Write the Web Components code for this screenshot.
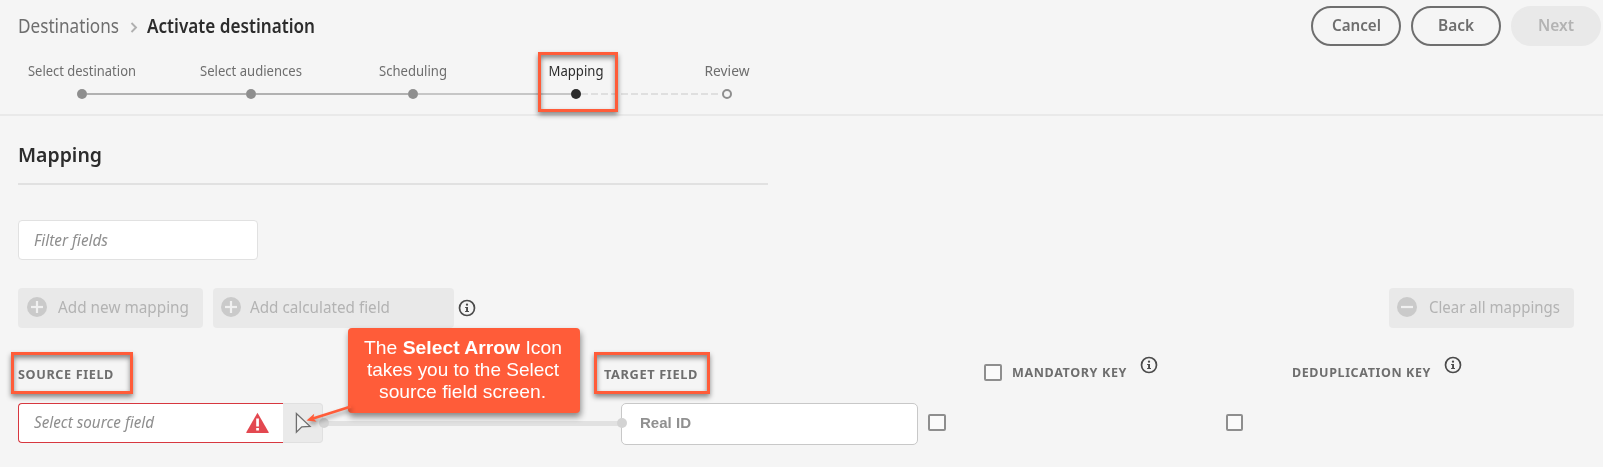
<!DOCTYPE html>
<html lang="en">
<head>
<meta charset="utf-8">
<title>Activate destination</title>
<style>
html,body{margin:0;padding:0;background:#f5f5f5;overflow:hidden}
body{width:1603px;height:467px;font-family:"Noto Sans","Open Sans",sans-serif;color:#6e6e6e}
</style>
</head>
<body>
<activate-page></activate-page>
<script>
const define = (name, html, init) => customElements.define(name, class extends HTMLElement {
  constructor() {
    super();
    const t = document.createElement('template');
    t.innerHTML = html;
    this.attachShadow({mode: 'open'}).append(t.content.cloneNode(true));
  }
  connectedCallback() { if (init) init.call(this, this.shadowRoot); }
});

/* Label set to a fixed width: w = width, s = font size */
define('fit-text', `<style>
:host{display:block;flex:none;height:20px;line-height:20px;white-space:nowrap}
span{display:inline-block;transform-origin:0 50%;vertical-align:top}
</style><span><slot></slot></span>`, function (r) {
  const w = +this.getAttribute('w'), span = r.querySelector('span');
  this.style.fontSize = this.getAttribute('s') + 'px';
  this.style.width = w + 'px';
  span.style.transform = 'scaleX(' + w / span.getBoundingClientRect().width + ')';
});

define('info-icon', `<style>:host{display:block;flex:none;width:18px;height:18px}svg{display:block}</style>
<svg width="18" height="18" viewBox="0 0 18 18"><circle cx="9" cy="9" r="7.5" fill="none" stroke="#4b4b4b" stroke-width="1.7"/>
<circle cx="9" cy="5.7" r="1.15" fill="#4b4b4b"/><path d="M7.1 7.9H10V11.9H11V13H7.1V11.9H8.1V9H7.1z" fill="#4b4b4b"/></svg>`);

define('check-box', `<style>:host{display:block;flex:none;box-sizing:border-box;width:18px;height:17px;border:2px solid #8e8e8e;border-radius:2px;background:#fafafa}</style>`);

define('call-frame', `<style>:host{display:block;box-sizing:border-box;position:absolute;border:3px solid #ff5c39;
box-shadow:0 3px 5px rgba(0,0,0,.45),inset 0 3px 5px rgba(0,0,0,.45)}</style>`);

define('pill-button', `<style>
:host{display:flex;box-sizing:border-box;width:90px;height:40px;border:2px solid #6e6e6e;border-radius:20px;justify-content:center;padding-top:7px;font-weight:600}
:host([disabled]){border-color:#e9e9e9;background:#e9e9e9;color:#b3b3b3}
</style><slot></slot>`);

define('action-button', `<style>
:host{display:flex;box-sizing:border-box;height:40px;border-radius:4px;background:#e9e9e9;color:#b3b3b3;padding:9px 0 0 9px}
svg{display:block;flex:none;margin-right:11px}
:host([minus]) .v{display:none}
:host([minus]){padding-left:8px}
:host([calc]){padding-left:8px}
:host([calc]) svg{margin-right:9px}
</style><svg width="20" height="20" viewBox="0 0 20 20"><circle cx="10" cy="10" r="10" fill="#cacaca"/><path d="M4 10H16" stroke="#f0f0f0" stroke-width="2.2"/><path class="v" d="M10 4V16" stroke="#f0f0f0" stroke-width="2.2"/></svg><slot></slot>`);

define('wizard-steps', `<style>
:host{display:grid;grid-template-columns:169px 162px 163px 151px 50px;margin-left:82px;height:40px}
.s{display:flex;flex-direction:column;position:relative}
fit-text{transform:translateX(-50%);height:20px}
.row{display:flex;align-items:center;height:10px;margin-top:8px}
i{display:block;box-sizing:border-box;flex:none;width:10px;height:10px;border-radius:50%;background:#8e8e8e;margin-left:-5px}
b{display:block;flex:1;height:2px;background:#b1b1b1;margin-right:5px}
.n b{background:#c6c6c6}
.on fit-text{color:#2c2c2c}.on i{background:#2c2c2c}
.on b{margin-right:9px;background:repeating-linear-gradient(90deg,#dfdfdf 0 7px,transparent 7px 10px)}
.last i{background:transparent;border:2px solid #8e8e8e}
</style>
<div class="s"><fit-text w="108" s="14">Select destination</fit-text><div class="row"><i></i><b></b></div></div>
<div class="s"><fit-text w="102" s="14">Select audiences</fit-text><div class="row"><i></i><b></b></div></div>
<div class="s n"><fit-text w="68" s="14">Scheduling</fit-text><div class="row"><i></i><b></b></div></div>
<div class="s on"><fit-text w="55" s="14">Mapping</fit-text><div class="row"><i></i><b></b></div></div>
<div class="s last"><fit-text w="45" s="14">Review</fit-text><div class="row"><i></i></div></div>`);

define('page-header', `<style>
:host{display:flex;box-sizing:border-box;justify-content:space-between;height:116px;border-bottom:2px solid #e9e9e9;position:relative}
nav{display:flex;height:20px;margin:16px 0 29px 18px;align-items:flex-start}
nav svg{display:block;margin:5.5px 9px 0 11px}
.cur{color:#2c2c2c;font-weight:600}
.act{display:flex;gap:10px;padding:6px 2px 0 0;align-items:flex-start}
wizard-steps{margin-top:-4px}
</style>
<div><nav><fit-text w="101" s="19">Destinations</fit-text><svg width="8" height="11" viewBox="0 0 8 11"><path d="M1.5 1L6 5.5L1.5 10" fill="none" stroke="#b0b0b0" stroke-width="1.9"/></svg><fit-text class="cur" w="168" s="19">Activate destination</fit-text></nav>
<wizard-steps></wizard-steps></div>
<div class="act"><pill-button><fit-text w="49" s="16">Cancel</fit-text></pill-button><pill-button><fit-text w="36" s="16">Back</fit-text></pill-button><pill-button disabled><fit-text w="36" s="16">Next</fit-text></pill-button></div>
<call-frame style="left:538px;top:52px;width:80px;height:60px"></call-frame>`);

define('source-input', `<style>
:host{display:flex;width:305px;height:40px}
.f{display:flex;box-sizing:border-box;width:265px;border:1px solid #d7373f;border-right:0;border-radius:4px 0 0 4px;background:#fff;padding:8px 14px 0 15px;justify-content:space-between;color:#8e8e8e;font-style:italic}
.b{box-sizing:border-box;width:40px;border:1px solid #e0e0e0;border-left:0;border-radius:0 4px 4px 0;background:#eaeaea}
svg{display:block}
</style>
<div class="f"><fit-text w="120" s="16">Select source field</fit-text><svg width="23" height="22" viewBox="0 0 23 22"><path d="M11.5.7L22.7 20.2Q23 21 22.3 21H.7Q0 21 .3 20.2z" fill="#e34850"/><path d="M10.2 6.5H12.9V14.5H10.2zM10.2 16H12.9V18.6H10.2z" fill="#fff"/></svg></div>
<div class="b"><svg width="39" height="38" viewBox="283 404 39 38"><path d="M296.4 413.5V432.2L301.8 426.8L310 426.4z" fill="#f3f3f3" stroke="#6e6e6e" stroke-width="1.3"/></svg></div>`);

define('link-line', `<style>
:host{display:flex;box-sizing:border-box;align-items:center;height:10px;width:308px;margin:15px -6px 0 -4px;position:relative;z-index:1}
b{flex:1;height:5px;background:#e1e1e1;margin:0 -5px}
i{width:10px;height:10px;border-radius:50%;background:#d3d3d3;position:relative}
</style><i></i><b></b><i></i>`);

define('tip-box', `<style>
:host{display:block;box-sizing:border-box;position:absolute;left:348px;top:328px;width:232px;height:85px;z-index:3}
.t{box-sizing:border-box;height:85px;border-radius:4px;background:#ff5c39;box-shadow:1px 4px 6px rgba(0,0,0,.45);color:#fff;font-family:"Liberation Sans",Arial,sans-serif;display:flex;flex-direction:column;align-items:center;gap:2px;padding:10px 3px 0 0}
svg{display:block;position:absolute;left:-48px;top:70px;filter:drop-shadow(1px 3px 2px rgba(0,0,0,.35))}
</style><svg width="55" height="32" viewBox="300 398 55 32"><path d="M351 406.5L313 418.5" stroke="#ff5c39" stroke-width="2.8"/><path d="M306.5 420.5L314.2 413.7L313.3 418.4L316.6 421.8z" fill="#ff5c39"/></svg>
<div class="t"><fit-text w="198" s="19">The <strong>Select Arrow</strong> Icon</fit-text><fit-text w="192" s="19">takes you to the Select</fit-text><fit-text w="167" s="19">source field screen.</fit-text></div>`);

define('mapping-panel', `<style>
:host{display:block;padding-left:18px}
h1{margin:0;box-sizing:border-box;width:750px;height:69px;padding-top:29px;border-bottom:2px solid #e1e1e1;color:#2c2c2c;font-weight:600}
.filter{box-sizing:border-box;width:240px;height:40px;margin-top:35px;border:1px solid #e1e1e1;border-radius:4px;background:#fff;padding:9px 0 0 15px;font-style:italic;color:#8e8e8e}
.bar{display:flex;height:40px;margin-top:28px;width:1556px}
.bar info-icon{margin:10.5px 0 0 4px}
.bar .end{margin-left:auto}
.head{display:flex;height:75px;box-sizing:border-box;padding-top:34px;font-weight:700;align-items:flex-start}
.head fit-text{letter-spacing:.6px;position:relative;top:1px}
.rows{display:flex;align-items:flex-start}
.target{box-sizing:border-box;width:297px;height:42px;border:1px solid #c8c8c8;border-radius:5px;background:#fff;padding:9px 0 0 18px;color:#909090;font-family:"Liberation Sans",Arial,sans-serif;font-weight:700}
</style>
<h1><fit-text w="84" s="20">Mapping</fit-text></h1>
<div class="filter"><fit-text w="74" s="16">Filter fields</fit-text></div>
<div class="bar"><action-button style="width:185px;margin-right:10px"><fit-text w="131" s="16">Add new mapping</fit-text></action-button><action-button calc style="width:241px"><fit-text w="140" s="16">Add calculated field</fit-text></action-button><info-icon></info-icon><action-button minus class="end" style="width:185px"><fit-text style="margin-left:1px" w="131" s="16">Clear all mappings</fit-text></action-button></div>
<div class="head"><fit-text style="margin-top:2px" w="96" s="12.5">SOURCE FIELD</fit-text><fit-text style="margin:2px 0 0 490px" w="94" s="12.5">TARGET FIELD</fit-text><check-box style="margin:2px 0 0 286px"></check-box><fit-text style="margin-left:10px" w="115" s="12.5">MANDATORY KEY</fit-text><info-icon style="margin:-6px 0 0 13px"></info-icon><fit-text style="margin-left:133.5px" w="139" s="12.5">DEDUPLICATION KEY</fit-text><info-icon style="margin:-6px 0 0 13.5px"></info-icon></div>
<div class="rows"><source-input></source-input><link-line></link-line><div class="target"><fit-text w="51" s="15">Real ID</fit-text></div><check-box style="margin:11px 0 0 10px"></check-box><check-box style="width:17px;margin:11px 0 0 280px"></check-box></div>`);

define('activate-page', `<style>:host{display:block;position:relative;width:1603px;height:467px;overflow:hidden;background:#f5f5f5}</style>
<page-header></page-header><mapping-panel></mapping-panel>
<call-frame style="left:11px;top:352px;width:122px;height:42px"></call-frame>
<call-frame style="left:594px;top:352px;width:116px;height:42px"></call-frame>
<tip-box></tip-box>`);
</script>
</body>
</html>
